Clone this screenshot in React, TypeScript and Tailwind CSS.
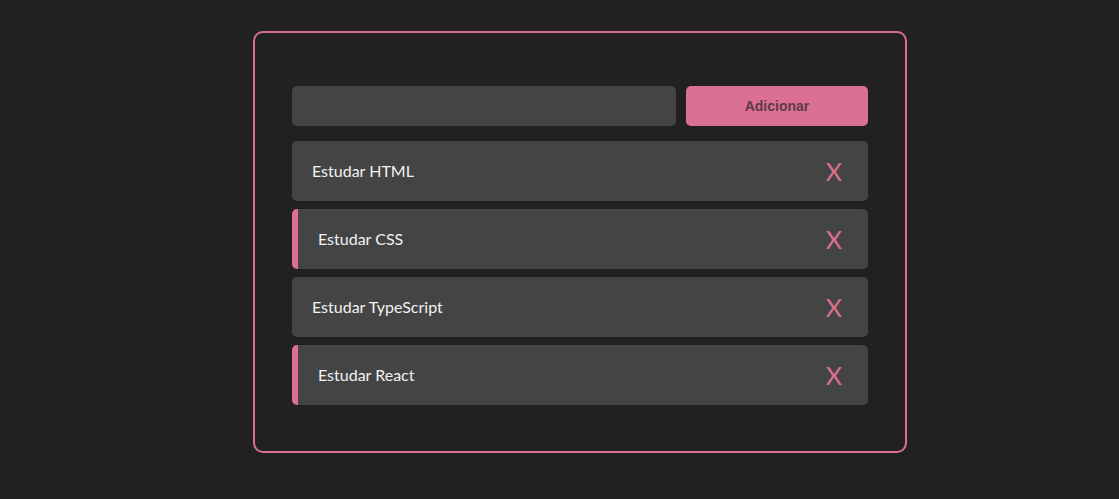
import React, { useState } from 'react';

interface Task {
  id: number;
  title: string;
  done: boolean;
}

const initialTasks: Task[] = [
  { id: 1, title: 'Estudar HTML', done: false },
  { id: 2, title: 'Estudar CSS', done: true },
  { id: 3, title: 'Estudar TypeScript', done: false },
  { id: 4, title: 'Estudar React', done: true },
];

const TaskItem: React.FC<{ task: Task; onToggle: (id: number) => void; onRemove: (id: number) => void }> = ({ task, onToggle, onRemove }) => {
  return (
    <div
      onClick={() => onToggle(task.id)}
      className={`flex h-[60px] items-center justify-between rounded-[5px] bg-[#444444] pr-[26px] ${
        task.done ? 'border-l-[6px] border-[#db7093] pl-5' : 'pl-5'
      }`}
    >
      <span className="font-['Lato',sans-serif] text-[16px] text-[#f2f2f2]">{task.title}</span>
      <button
        onClick={(e) => {
          e.stopPropagation();
          onRemove(task.id);
        }}
        className="font-['Lato',sans-serif] text-[25px] leading-none text-[#db7093]"
      >
        X
      </button>
    </div>
  );
};

export default function App() {
  const [tasks, setTasks] = useState<Task[]>(initialTasks);
  const [text, setText] = useState('');

  const addTask = () => {
    if (!text.trim()) return;
    setTasks(prev => [...prev, { id: Date.now(), title: text, done: false }]);
    setText('');
  };

  const toggleTask = (id: number) => {
    setTasks(prev => prev.map(t => (t.id === id ? { ...t, done: !t.done } : t)));
  };

  const removeTask = (id: number) => {
    setTasks(prev => prev.filter(t => t.id !== id));
  };

  return (
    <div className="flex min-h-[499px] w-full justify-center bg-[#212121] pl-[41px] pt-[31px]">
      <div className="h-[422px] w-[654px] rounded-[10px] border-2 border-[#db7093] px-[37px] pt-[53px]">
        <div className="flex gap-[10px]">
          <input
            value={text}
            onChange={e => setText(e.target.value)}
            className="h-10 flex-1 rounded-[5px] bg-[#444444] px-4 text-[16px] text-white outline-none"
          />
          <button
            onClick={addTask}
            className="h-10 w-[182px] rounded-[5px] bg-[#db7093] font-['Liberation_Sans',Arial,sans-serif] text-[14px] font-bold text-[#5c3a4a]"
          >
            Adicionar
          </button>
        </div>
        <div className="mt-[15px] flex flex-col gap-2">
          {tasks.map(task => (
            <TaskItem key={task.id} task={task} onToggle={toggleTask} onRemove={removeTask} />
          ))}
        </div>
      </div>
    </div>
  );
}
